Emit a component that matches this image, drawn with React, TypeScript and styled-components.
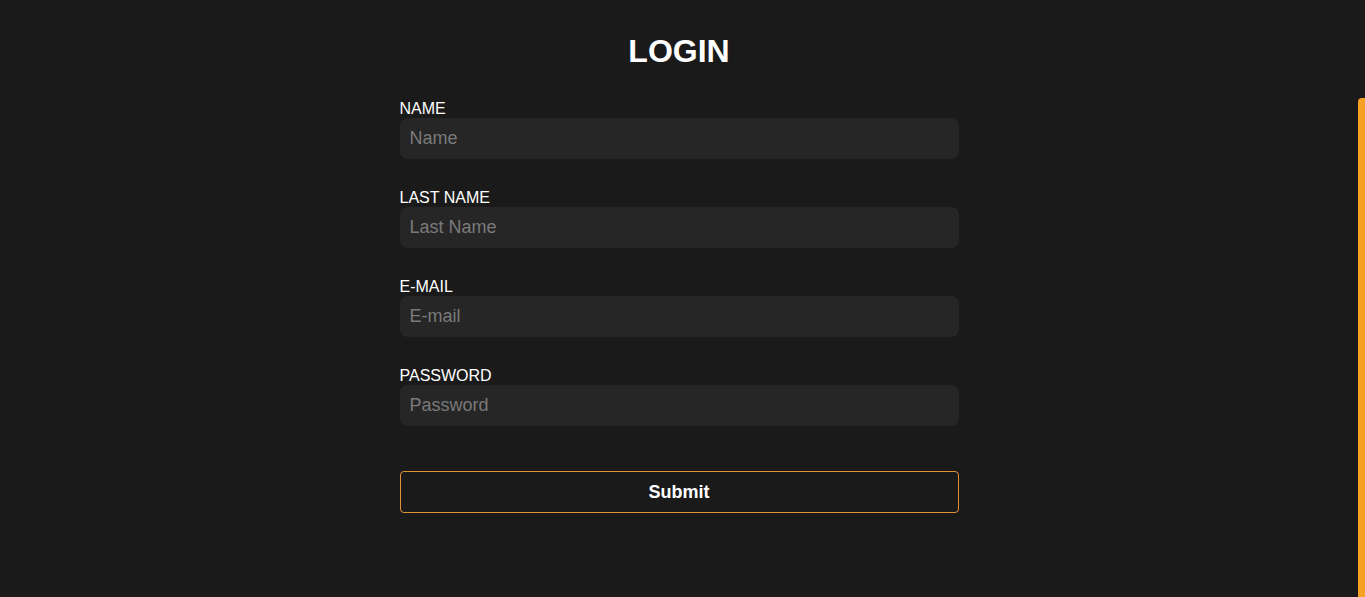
import React from "react";
import styled, { createGlobalStyle } from "styled-components";

const Global = createGlobalStyle`
  html, body { margin: 0; padding: 0; background: #1a1a1a; }
  body { font-family: "Liberation Sans", Arial, sans-serif; color: #ffffff; overflow: hidden; }
  * { box-sizing: border-box; }
`;

const Page = styled.div`
  min-height: 597px;
  margin-right: 7px;
  display: flex;
  justify-content: center;
`;

const Form = styled.form`
  width: 559px;
  display: flex;
  flex-direction: column;
`;

const Title = styled.h1`
  margin: 33px 0 30px;
  font-size: 32px;
  line-height: 37px;
  font-weight: 700;
  text-align: center;
  color: #ffffff;
`;

const Field = styled.div`
  display: flex;
  flex-direction: column;
  margin-bottom: 30px;
`;

const Label = styled.label`
  font-size: 16px;
  line-height: 18px;
  color: #ffffff;
`;

const Input = styled.input`
  height: 41px;
  border: none;
  outline: none;
  border-radius: 8px;
  background: #262626;
  padding: 0 10px;
  font-family: "Liberation Sans", Arial, sans-serif;
  font-size: 18px;
  color: #ffffff;
  &::placeholder { color: #7a7a7a; }
`;

const Submit = styled.button`
  margin-top: 15px;
  height: 42px;
  border: 1px solid #e0952c;
  border-radius: 4px;
  background: transparent;
  color: #ffffff;
  font-family: "Liberation Sans", Arial, sans-serif;
  font-size: 18px;
  font-weight: 700;
  cursor: pointer;
`;

const ScrollThumb = styled.div`
  position: fixed;
  right: 0;
  top: 98px;
  bottom: 0;
  width: 7px;
  background: #f6a124;
  border-radius: 4px 0 0 0;
`;

const fields = [
  { label: "NAME", placeholder: "Name", type: "text" },
  { label: "LAST NAME", placeholder: "Last Name", type: "text" },
  { label: "E-MAIL", placeholder: "E-mail", type: "email" },
  { label: "PASSWORD", placeholder: "Password", type: "password" },
];

export default function App() {
  return (
    <>
      <Global />
      <Page>
        <Form onSubmit={(e) => e.preventDefault()}>
          <Title>LOGIN</Title>
          {fields.map((f) => (
            <Field key={f.label}>
              <Label>{f.label}</Label>
              <Input type={f.type} placeholder={f.placeholder} />
            </Field>
          ))}
          <Submit type="submit">Submit</Submit>
        </Form>
      </Page>
      <ScrollThumb />
    </>
  );
}
